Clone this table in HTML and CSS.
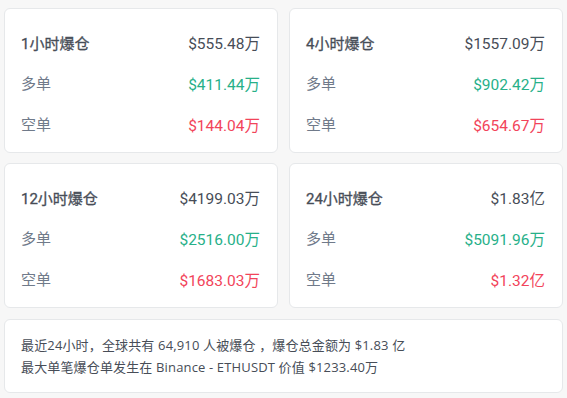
FILE: index.html
```html
<!DOCTYPE html>
<html lang="zh-CN">
<head>
<meta charset="utf-8">
<title>爆仓统计</title>
<link rel="stylesheet" href="styles.css">
</head>
<body>
<div class="page">
  <div class="grid">
    <div class="card">
      <div class="row title"><span class="label">1小时爆仓</span><span class="val">$555.48万</span></div>
      <div class="row"><span class="label">多单</span><span class="val up">$411.44万</span></div>
      <div class="row"><span class="label">空单</span><span class="val down">$144.04万</span></div>
    </div>
    <div class="card">
      <div class="row title"><span class="label">4小时爆仓</span><span class="val">$1557.09万</span></div>
      <div class="row"><span class="label">多单</span><span class="val up">$902.42万</span></div>
      <div class="row"><span class="label">空单</span><span class="val down">$654.67万</span></div>
    </div>
    <div class="card">
      <div class="row title"><span class="label">12小时爆仓</span><span class="val">$4199.03万</span></div>
      <div class="row"><span class="label">多单</span><span class="val up">$2516.00万</span></div>
      <div class="row"><span class="label">空单</span><span class="val down">$1683.03万</span></div>
    </div>
    <div class="card">
      <div class="row title"><span class="label">24小时爆仓</span><span class="val">$1.83亿</span></div>
      <div class="row"><span class="label">多单</span><span class="val up">$5091.96万</span></div>
      <div class="row"><span class="label">空单</span><span class="val down">$1.32亿</span></div>
    </div>
  </div>
  <div class="summary">
    <p>最近24小时，全球共有 64,910 人被爆仓 ，爆仓总金额为 $1.83 亿</p>
    <p>最大单笔爆仓单发生在 Binance - ETHUSDT 价值 $1233.40万</p>
  </div>
</div>
</body>
</html>
```

FILE: styles.css
```css
html, body {
  margin: 0;
  padding: 0;
  background: #f7f7f7;
}
body {
  font-family: Roboto, "Noto Sans CJK SC", sans-serif;
  color: #474d57;
}
.page {
  padding: 8px 4px 0 4px;
}
.grid {
  display: grid;
  grid-template-columns: 274px 274px;
  column-gap: 11px;
  row-gap: 10px;
}
.card {
  background: #ffffff;
  border: 1px solid #e6e8ea;
  border-radius: 6px;
  padding: 13px 17px 8px 16px;
  height: 145px;
  box-sizing: border-box;
}
.row {
  display: flex;
  justify-content: space-between;
  align-items: center;
  height: 41px;
  font-size: 15px;
}
.row.title {
  height: 40px;
}
.label {
  color: #707a8a;
}
.title .label {
  color: #474d57;
  font-weight: 400;
  -webkit-text-stroke: 0.3px #474d57;
}
.val {
  color: #474d57;
  font-size: 15.5px;
}
.val.up {
  color: #27b089;
}
.val.down {
  color: #f2445a;
}
.summary {
  margin-top: 11px;
  background: #ffffff;
  border: 1px solid #e6e8ea;
  border-radius: 6px;
  padding: 14px 16px;
  font-family: "Open Sans", "Noto Sans CJK SC", sans-serif;
  font-size: 13px;
  line-height: 22px;
  letter-spacing: 0.15px;
  color: #474d57;
}
.summary p {
  margin: 0;
}
```
